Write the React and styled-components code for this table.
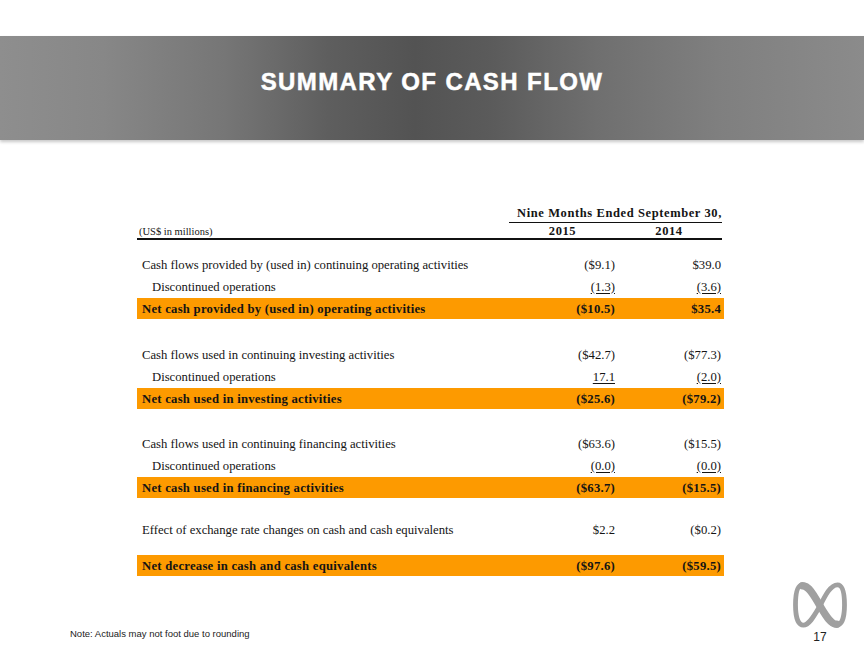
import React from "react";
import styled, { createGlobalStyle } from "styled-components";

const Global = createGlobalStyle`
  html, body { margin: 0; padding: 0; background: #fff; }
  body { font-family: "Liberation Serif", "Times New Roman", serif; }
`;

const Page = styled.div`
  width: 864px;
  height: 648px;
  display: flex;
  flex-direction: column;
  overflow: hidden;
  background: #fff;
`;

const Header = styled.header`
  margin-top: 36px;
  height: 104px;
  display: flex;
  align-items: center;
  justify-content: center;
  padding-bottom: 12px;
  box-sizing: border-box;
  background: linear-gradient(
    to right,
    #8e8e8e 0%,
    #878787 12%,
    #767676 26%,
    #5e5e5e 38%,
    #535353 48%,
    #5b5b5b 57%,
    #6f6f6f 69%,
    #7f7f7f 83%,
    #8b8b8b 100%
  );
  box-shadow: 0 2px 3px rgba(0, 0, 0, 0.22);
`;

const Title = styled.h1`
  margin: 0;
  color: #fff;
  font-family: "Liberation Sans", Arial, sans-serif;
  font-weight: 700;
  font-size: 24px;
  letter-spacing: 1.4px;
  -webkit-text-stroke: 0.5px #fff;
`;

const Table = styled.section`
  margin: 64px 0 0 137px;
  width: 587px;
  color: #141414;
`;

const SuperHead = styled.div`
  display: grid;
  grid-template-columns: 372px 213px;
`;

const SuperTitle = styled.div`
  grid-column: 2;
  height: 18px;
  border-bottom: 1px solid #111;
  font-weight: 700;
  font-size: 12.5px;
  letter-spacing: 0.6px;
  text-align: center;
  line-height: 18px;
  padding-left: 8px;
  white-space: nowrap;
`;

const HeadRow = styled.div`
  display: grid;
  grid-template-columns: 372px 107px 106px;
  height: 15px;
  align-items: end;
  border-bottom: 2px solid #111;
  margin-right: 2px;
  margin-bottom: 14px;
`;

const Units = styled.div`
  font-size: 10.5px;
  padding-left: 2px;
  line-height: 12px;
`;

const Year = styled.div`
  font-size: 12.5px;
  font-weight: 700;
  letter-spacing: 0.6px;
  text-align: center;
  line-height: 14px;
`;

const Row = styled.div`
  display: grid;
  grid-template-columns: 372px 107px 108px;
  height: ${(p) => (p.$total ? 21 : 22)}px;
  align-items: center;
  background: ${(p) => (p.$total ? "#fd9a00" : "transparent")};
  font-weight: ${(p) => (p.$total ? 700 : 400)};
  font-size: 12.7px;
  letter-spacing: ${(p) => (p.$total ? "0.25px" : "0")};
`;

const Label = styled.div`
  padding-left: ${(p) => (p.$sub ? 15 : 5)}px;
  white-space: nowrap;
  padding-top: ${(p) => (p.$total ? 2 : 0)}px;
`;

const Value = styled.div`
  text-align: right;
  padding-right: ${(p) => (p.$last ? 3 : 1)}px;
  text-decoration: ${(p) => (p.$under ? "underline" : "none")};
  text-underline-offset: 2px;
  padding-top: ${(p) => (p.$total ? 2 : 0)}px;
`;

const Spacer = styled.div`
  height: ${(p) => p.$h}px;
`;

const Footer = styled.footer`
  margin-top: auto;
  display: flex;
  justify-content: space-between;
  align-items: flex-end;
  padding: 0 16px 4px 70px;
`;

const Note = styled.div`
  font-family: "Liberation Sans", Arial, sans-serif;
  font-size: 9.5px;
  color: #222;
  margin-bottom: 5px;
`;

const Brand = styled.div`
  display: flex;
  flex-direction: column;
  align-items: center;
`;

const PageNum = styled.div`
  font-family: "Liberation Sans", Arial, sans-serif;
  font-size: 12px;
  color: #222;
  line-height: 13px;
  margin-top: -1px;
`;

const Logo = () => (
  <svg width="56" height="54" viewBox="-3 -3 64 60">
    <g fill="none" stroke="#a0a0a0" strokeLinecap="round">
      <path
        strokeWidth="5.5"
        d="M29 28 C 35 16, 41 4, 49 4 C 56 4, 57 16, 57 27 C 57 38, 55 50, 48 50 C 41 50, 35 38, 29 28 C 23 18, 17 4, 9 4 C 2 4, 1 16, 1 27 C 1 38, 3 50, 10 50 C 17 50, 23 38, 29 28 Z"
      />
      <path
        strokeWidth="8.5"
        d="M9 5 C 17 5, 23 18, 29 28 C 35 38, 41 49, 48 49"
      />
    </g>
  </svg>
);

const sections = [
  {
    rows: [
      { label: "Cash flows provided by (used in) continuing operating activities", v1: "($9.1)", v2: "$39.0" },
      { label: "Discontinued operations", v1: "(1.3)", v2: "(3.6)", sub: true, under: true },
    ],
    total: { label: "Net cash provided by (used in) operating activities", v1: "($10.5)", v2: "$35.4" },
    after: 25,
  },
  {
    rows: [
      { label: "Cash flows used in continuing investing activities", v1: "($42.7)", v2: "($77.3)" },
      { label: "Discontinued operations", v1: "17.1", v2: "(2.0)", sub: true, under: true },
    ],
    total: { label: "Net cash used in investing activities", v1: "($25.6)", v2: "($79.2)" },
    after: 24,
  },
  {
    rows: [
      { label: "Cash flows used in continuing financing activities", v1: "($63.6)", v2: "($15.5)" },
      { label: "Discontinued operations", v1: "(0.0)", v2: "(0.0)", sub: true, under: true },
    ],
    total: { label: "Net cash used in financing activities", v1: "($63.7)", v2: "($15.5)" },
    after: 21,
  },
  {
    rows: [
      { label: "Effect of exchange rate changes on cash and cash equivalents", v1: "$2.2", v2: "($0.2)" },
    ],
    gap: 14,
    total: { label: "Net decrease in cash and cash equivalents", v1: "($97.6)", v2: "($59.5)" },
    after: 0,
  },
];

export default function App() {
  return (
    <>
      <Global />
      <Page>
        <Header>
          <Title>SUMMARY OF CASH FLOW</Title>
        </Header>
        <Table>
          <SuperHead>
            <SuperTitle>Nine Months Ended September 30,</SuperTitle>
          </SuperHead>
          <HeadRow>
            <Units>(US$ in millions)</Units>
            <Year>2015</Year>
            <Year>2014</Year>
          </HeadRow>
          {sections.map((s, i) => (
            <React.Fragment key={i}>
              {s.rows.map((r, j) => (
                <Row key={j}>
                  <Label $sub={r.sub}>{r.label}</Label>
                  <Value $under={r.under}>{r.v1}</Value>
                  <Value $under={r.under} $last>{r.v2}</Value>
                </Row>
              ))}
              {s.gap ? <Spacer $h={s.gap} /> : null}
              <Row $total>
                <Label $total>{s.total.label}</Label>
                <Value $total>{s.total.v1}</Value>
                <Value $total $last>{s.total.v2}</Value>
              </Row>
              {s.after ? <Spacer $h={s.after} /> : null}
            </React.Fragment>
          ))}
        </Table>
        <Footer>
          <Note>Note: Actuals may not foot due to rounding</Note>
          <Brand>
            <Logo />
            <PageNum>17</PageNum>
          </Brand>
        </Footer>
      </Page>
    </>
  );
}
